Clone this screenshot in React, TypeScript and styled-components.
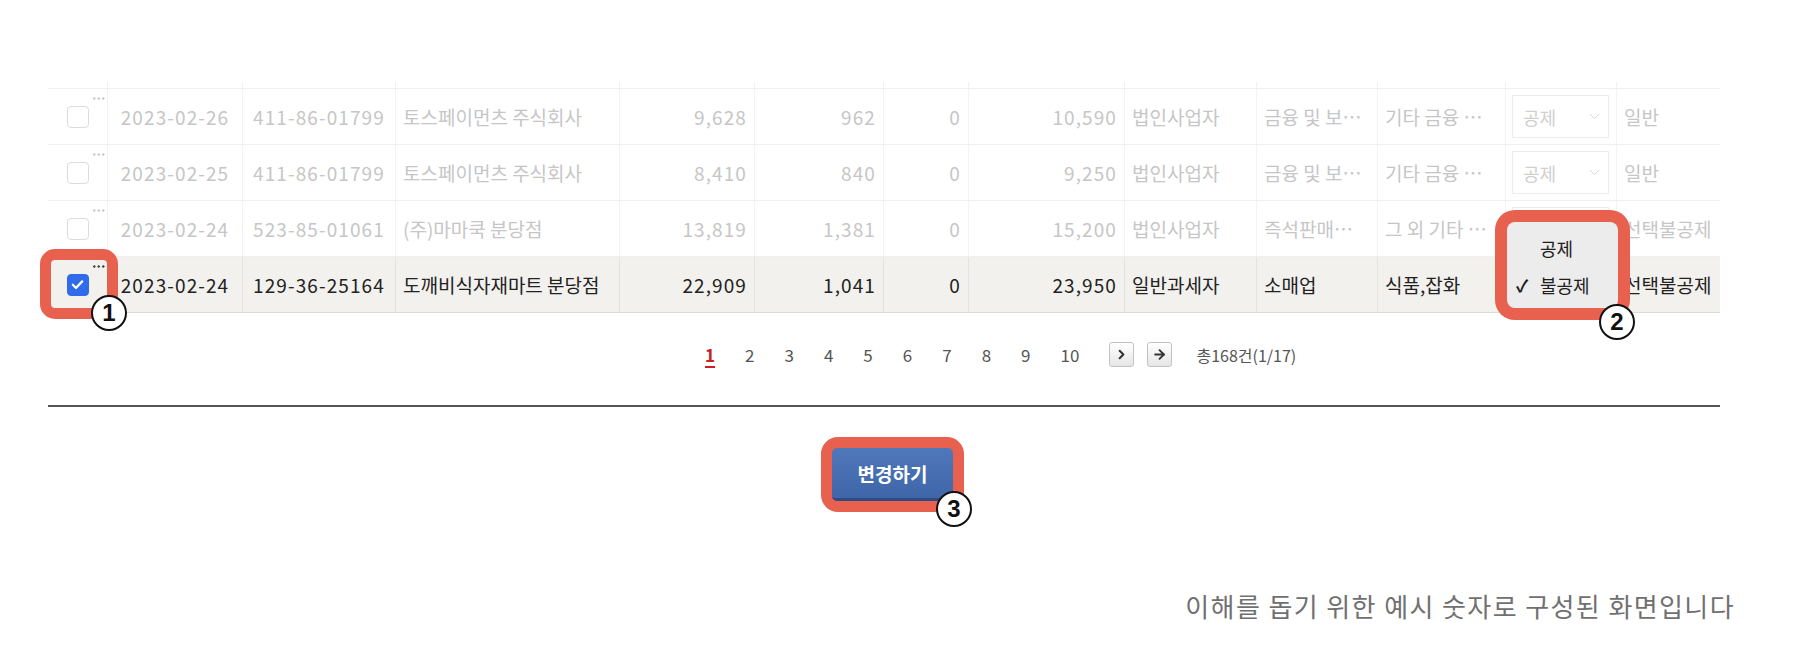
import React from 'react';
import styled, { createGlobalStyle, css } from 'styled-components';
import { ChevronDown, ChevronRight, ArrowRight } from 'lucide-react';

const RED = '#e8604e';
const COLUMNS = '60px 135px 153px 224px 135px 129px 85px 156px 132px 121px 128px 111px 103px';

const GlobalStyle = createGlobalStyle`
  html, body {
    margin: 0;
    padding: 0;
    background: #fff;
  }
  body {
    font-family: 'Noto Sans CJK KR', 'Noto Sans', sans-serif;
    color: #222;
  }
  * {
    box-sizing: border-box;
  }
`;

const Page = styled.div`
  width: 1800px;
  height: 667px;
  padding: 82px 0 0 48px;
  overflow: hidden;
`;

const Board = styled.div`
  width: 1672px;
`;

const HeaderStrip = styled.div`
  display: grid;
  grid-template-columns: ${COLUMNS};
  height: 6px;

  & > span {
    border-right: 1px solid #f1f1f1;
  }
  & > span:last-child {
    border-right: none;
  }
`;

const Row = styled.div<{ $active?: boolean }>`
  display: grid;
  grid-template-columns: ${COLUMNS};
  height: ${p => (p.$active ? '57px' : '56px')};
  border-top: 1px solid #efefef;
  background: ${p => (p.$active ? '#f3f1ee' : '#fff')};
  color: ${p => (p.$active ? '#222' : '#c6c6c6')};
  font-size: 19px;
  ${p =>
    p.$active &&
    css`
      border-bottom: 1px solid #dedbd7;
    `}
`;

const Cell = styled.div<{ $align?: 'left' | 'center' | 'right'; $active?: boolean; $num?: boolean }>`
  position: relative;
  display: flex;
  align-items: center;
  justify-content: ${p =>
    p.$align === 'center' ? 'center' : p.$align === 'right' ? 'flex-end' : 'flex-start'};
  padding: 0 7px;
  border-right: 1px solid ${p => (p.$active ? '#e6e3df' : '#f3f3f3')};
  white-space: nowrap;
  letter-spacing: ${p => (p.$num ? '1.1px' : '0')};

  &:last-child {
    border-right: none;
  }
`;

const Dots = styled.span<{ $active?: boolean }>`
  position: absolute;
  left: 44px;
  top: 8px;
  width: 13px;
  height: 3px;
  background: radial-gradient(circle, ${p => (p.$active ? '#444' : '#c9c9c9')} 1px, transparent 1.4px) 0 0 / 4.5px 3px repeat-x;
`;

const Check = styled.span<{ $checked?: boolean }>`
  width: 22px;
  height: 22px;
  border-radius: 4px;
  border: 1.5px solid ${p => (p.$checked ? '#2f6bea' : '#dcdcdc')};
  background: ${p => (p.$checked ? '#2f6bea' : '#fff')};
  display: flex;
  align-items: center;
  justify-content: center;
`;

const CheckRing = styled.span`
  position: absolute;
  left: -8px;
  top: -8px;
  width: 78px;
  height: 70px;
  border: 11px solid ${RED};
  border-radius: 15px;
  pointer-events: none;
  z-index: 2;
`;

const Select = styled.div`
  width: 98px;
  height: 43px;
  border: 1px solid #ececec;
  background: #fff;
  display: flex;
  align-items: center;
  justify-content: space-between;
  padding: 0 5px 0 10px;
  color: #d0d0d0;
  font-size: 18px;
`;

const MenuFrame = styled.div`
  position: absolute;
  left: -11px;
  top: -47px;
  z-index: 3;
  padding: 12px;
  background: ${RED};
  border-radius: 20px;
`;

const Menu = styled.div`
  width: 111px;
  height: 86px;
  background: #ececec;
  border-radius: 8px;
  padding-top: 7px;
`;

const MenuItem = styled.div`
  height: 37px;
  display: flex;
  align-items: center;
  padding-left: 9px;
  font-size: 18px;
  color: #1e1e1e;
`;

const Tick = styled.span`
  width: 24px;
  font-size: 17px;
  font-weight: 700;
`;

const Badge = styled.span<{ $left?: number; $top?: number; $right?: number; $bottom?: number }>`
  position: absolute;
  ${p => p.$left !== undefined && `left: ${p.$left}px;`}
  ${p => p.$top !== undefined && `top: ${p.$top}px;`}
  ${p => p.$right !== undefined && `right: ${p.$right}px;`}
  ${p => p.$bottom !== undefined && `bottom: ${p.$bottom}px;`}
  width: 36px;
  height: 36px;
  border-radius: 50%;
  background: #fff;
  border: 2.5px solid #111;
  display: flex;
  align-items: center;
  justify-content: center;
  font: 700 24px 'Liberation Sans', 'Noto Sans', sans-serif;
  color: #111;
  z-index: 4;
`;

const Pager = styled.div`
  display: flex;
  align-items: center;
  height: 25px;
  margin-top: 29px;
  padding-left: 657px;
  font-size: 17px;
  color: #555;
`;

const PageNum = styled.span<{ $current?: boolean }>`
  margin-right: 30px;
  line-height: 25px;
  ${p =>
    p.$current &&
    css`
      color: #c8201f;
      font-weight: 700;
      text-decoration: underline;
      text-decoration-thickness: 2px;
      text-underline-offset: 4px;
    `}
`;

const PageButton = styled.span<{ $gap: number }>`
  width: 25px;
  height: 25px;
  margin-right: ${p => p.$gap}px;
  border: 1px solid #c2c2c2;
  border-radius: 3px;
  background: linear-gradient(#ffffff, #e6e6e6);
  display: flex;
  align-items: center;
  justify-content: center;
  color: #333;
`;

const Total = styled.span`
  font-size: 16px;
  color: #555;
`;

const Divider = styled.div`
  margin-top: 38px;
  height: 2px;
  background: #555;
`;

const ActionRow = styled.div`
  display: flex;
  justify-content: center;
  padding-left: 17px;
  margin-top: 30px;
`;

const ButtonFrame = styled.div`
  position: relative;
  padding: 11px;
  background: ${RED};
  border-radius: 17px;
`;

const SubmitButton = styled.button`
  width: 121px;
  height: 53px;
  border: none;
  border-bottom: 3px solid #2d4c85;
  border-radius: 5px;
  background: linear-gradient(#4f78bb, #3e66a9);
  color: #fff;
  font-family: 'Noto Sans CJK KR', sans-serif;
  font-size: 19px;
  font-weight: 700;
  padding: 0;
`;

const Footer = styled.div`
  margin-top: 78px;
  width: 1687px;
  display: flex;
  justify-content: flex-end;
  font-size: 26px;
  letter-spacing: 1.4px;
  line-height: 32px;
  color: #707070;
`;

interface Invoice {
  date: string;
  bizNo: string;
  name: string;
  supply: string;
  vat: string;
  service: string;
  total: string;
  bizType: string;
  industry: string;
  item: string;
  kind: string;
}

const rows: Invoice[] = [
  {
    date: '2023-02-26', bizNo: '411-86-01799', name: '토스페이먼츠 주식회사', supply: '9,628', vat: '962',
    service: '0', total: '10,590', bizType: '법인사업자', industry: '금융 및 보…', item: '기타 금융 …', kind: '일반'
  },
  {
    date: '2023-02-25', bizNo: '411-86-01799', name: '토스페이먼츠 주식회사', supply: '8,410', vat: '840',
    service: '0', total: '9,250', bizType: '법인사업자', industry: '금융 및 보…', item: '기타 금융 …', kind: '일반'
  },
  {
    date: '2023-02-24', bizNo: '523-85-01061', name: '(주)마마쿡 분당점', supply: '13,819', vat: '1,381',
    service: '0', total: '15,200', bizType: '법인사업자', industry: '즉석판매…', item: '그 외 기타 …', kind: '선택불공제'
  },
  {
    date: '2023-02-24', bizNo: '129-36-25164', name: '도깨비식자재마트 분당점', supply: '22,909', vat: '1,041',
    service: '0', total: '23,950', bizType: '일반과세자', industry: '소매업', item: '식품,잡화', kind: '선택불공제'
  }
];

const CheckMark = () => (
  <svg width="15" height="15" viewBox="0 0 24 24">
    <path d="M4.5 12.5l5 5L19.5 7" fill="none" stroke="#fff" strokeWidth="3.6" strokeLinecap="round" strokeLinejoin="round" />
  </svg>
);

const App: React.FC = () => {
  const selected = rows.length - 1;

  return (
    <>
      <GlobalStyle />
      <Page>
        <Board>
          <HeaderStrip>
            {COLUMNS.split(' ').map((_, i) => (
              <span key={i} />
            ))}
          </HeaderStrip>

          {rows.map((row, i) => {
            const active = i === selected;
            return (
              <Row key={i} $active={active}>
                <Cell $align="center" $active={active}>
                  <Dots $active={active} />
                  <Check $checked={active}>{active && <CheckMark />}</Check>
                  {active && (
                    <>
                      <CheckRing />
                      <Badge $left={43} $top={38}>1</Badge>
                    </>
                  )}
                </Cell>
                <Cell $align="center" $active={active} $num>{row.date}</Cell>
                <Cell $align="center" $active={active} $num>{row.bizNo}</Cell>
                <Cell $active={active}>{row.name}</Cell>
                <Cell $align="right" $active={active} $num>{row.supply}</Cell>
                <Cell $align="right" $active={active} $num>{row.vat}</Cell>
                <Cell $align="right" $active={active} $num>{row.service}</Cell>
                <Cell $align="right" $active={active} $num>{row.total}</Cell>
                <Cell $active={active}>{row.bizType}</Cell>
                <Cell $active={active}>{row.industry}</Cell>
                <Cell $active={active}>{row.item}</Cell>
                <Cell $active={active} style={{ paddingLeft: 6 }}>
                  <Select>
                    공제
                    <ChevronDown size={17} strokeWidth={1.3} color="#d4d4d4" />
                  </Select>
                  {active && (
                    <MenuFrame>
                      <Menu>
                        <MenuItem>
                          <Tick />
                          공제
                        </MenuItem>
                        <MenuItem>
                          <Tick>✓</Tick>
                          불공제
                        </MenuItem>
                      </Menu>
                      <Badge $right={-5} $bottom={-20}>2</Badge>
                    </MenuFrame>
                  )}
                </Cell>
                <Cell $active={active}>{row.kind}</Cell>
              </Row>
            );
          })}

          <Pager>
            {[1, 2, 3, 4, 5, 6, 7, 8, 9, 10].map(n => (
              <PageNum key={n} $current={n === 1}>{n}</PageNum>
            ))}
            <PageButton $gap={13}>
              <ChevronRight size={15} strokeWidth={3.2} />
            </PageButton>
            <PageButton $gap={24}>
              <ArrowRight size={15} strokeWidth={3} />
            </PageButton>
            <Total>총168건(1/17)</Total>
          </Pager>

          <Divider />

          <ActionRow>
            <ButtonFrame>
              <SubmitButton>변경하기</SubmitButton>
              <Badge $right={-8} $bottom={-15}>3</Badge>
            </ButtonFrame>
          </ActionRow>

          <Footer>이해를 돕기 위한 예시 숫자로 구성된 화면입니다</Footer>
        </Board>
      </Page>
    </>
  );
};

export default App;
